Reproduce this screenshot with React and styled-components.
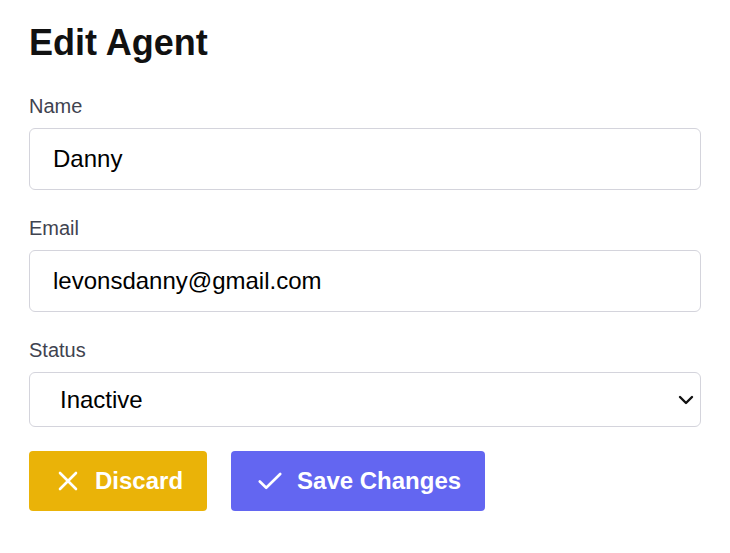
import React from "react";
import styled, { createGlobalStyle } from "styled-components";

const Global = createGlobalStyle`
  html, body { margin: 0; padding: 0; background: #ffffff; }
  body { font-family: "Liberation Sans", Arial, sans-serif; }
  * { box-sizing: border-box; }
`;

const chevron =
  "data:image/svg+xml;utf8," +
  encodeURIComponent(
    '<svg xmlns="http://www.w3.org/2000/svg" width="16" height="10" viewBox="0 0 16 10"><path d="M2 2 L8 8 L14 2" fill="none" stroke="#111" stroke-width="2.4" stroke-linecap="round" stroke-linejoin="round"/></svg>'
  );

const Page = styled.div`
  padding: 22px 29px 20px 29px;
  width: 730px;
`;

const Title = styled.h1`
  margin: 0 0 32px 0;
  font-size: 36px;
  font-weight: 700;
  color: #111111;
  line-height: 41px;
`;

const Field = styled.div`
  display: flex;
  flex-direction: column;
  gap: 10px;
  margin-bottom: 27px;
`;

const Label = styled.label`
  font-size: 20px;
  line-height: 23px;
  color: #3f4350;
`;

const Input = styled.input`
  width: 100%;
  height: 62px;
  padding: 0 23px;
  border: 1px solid #d4d4dc;
  border-radius: 6px;
  font-family: inherit;
  font-size: 24px;
  color: #000;
  background: #fff;
  outline: none;
`;

const Select = styled.select`
  appearance: none;
  -webkit-appearance: none;
  width: 100%;
  height: 55px;
  padding: 0 40px 0 30px;
  border: 1px solid #d4d4dc;
  border-radius: 6px;
  font-family: inherit;
  font-size: 24px;
  color: #000;
  background: #fff url("${chevron}") no-repeat right 6px center / 16px 10px;
  outline: none;
`;

const Actions = styled.div`
  display: flex;
  gap: 24px;
  margin-top: -3px;
`;

const Button = styled.button`
  display: inline-flex;
  align-items: center;
  gap: 15px;
  height: 60px;
  padding: 0 24px 0 27px;
  border: none;
  border-radius: 4px;
  background: ${(p) => p.$bg};
  color: #fff;
  font-family: inherit;
  font-size: 24px;
  font-weight: 700;
  cursor: pointer;
`;

const XIcon = () => (
  <svg width="24" height="24" viewBox="0 0 24 24" fill="none" stroke="#fff" strokeWidth="2.6" strokeLinecap="round">
    <path d="M4 4 L20 20 M20 4 L4 20" />
  </svg>
);

const CheckIcon = () => (
  <svg width="24" height="24" viewBox="0 0 24 24" fill="none" stroke="#fff" strokeWidth="2.6" strokeLinecap="round" strokeLinejoin="round">
    <path d="M1.8 12.5 L8.2 18.8 L22.2 5" />
  </svg>
);

export default function App() {
  return (
    <>
      <Global />
      <Page>
        <Title>Edit Agent</Title>
        <Field>
          <Label>Name</Label>
          <Input defaultValue="Danny" />
        </Field>
        <Field>
          <Label>Email</Label>
          <Input defaultValue="levonsdanny@gmail.com" />
        </Field>
        <Field>
          <Label>Status</Label>
          <Select defaultValue="Inactive">
            <option>Active</option>
            <option>Inactive</option>
          </Select>
        </Field>
        <Actions>
          <Button $bg="#eab308">
            <XIcon />
            Discard
          </Button>
          <Button $bg="#6366f1">
            <CheckIcon />
            Save Changes
          </Button>
        </Actions>
      </Page>
    </>
  );
}
